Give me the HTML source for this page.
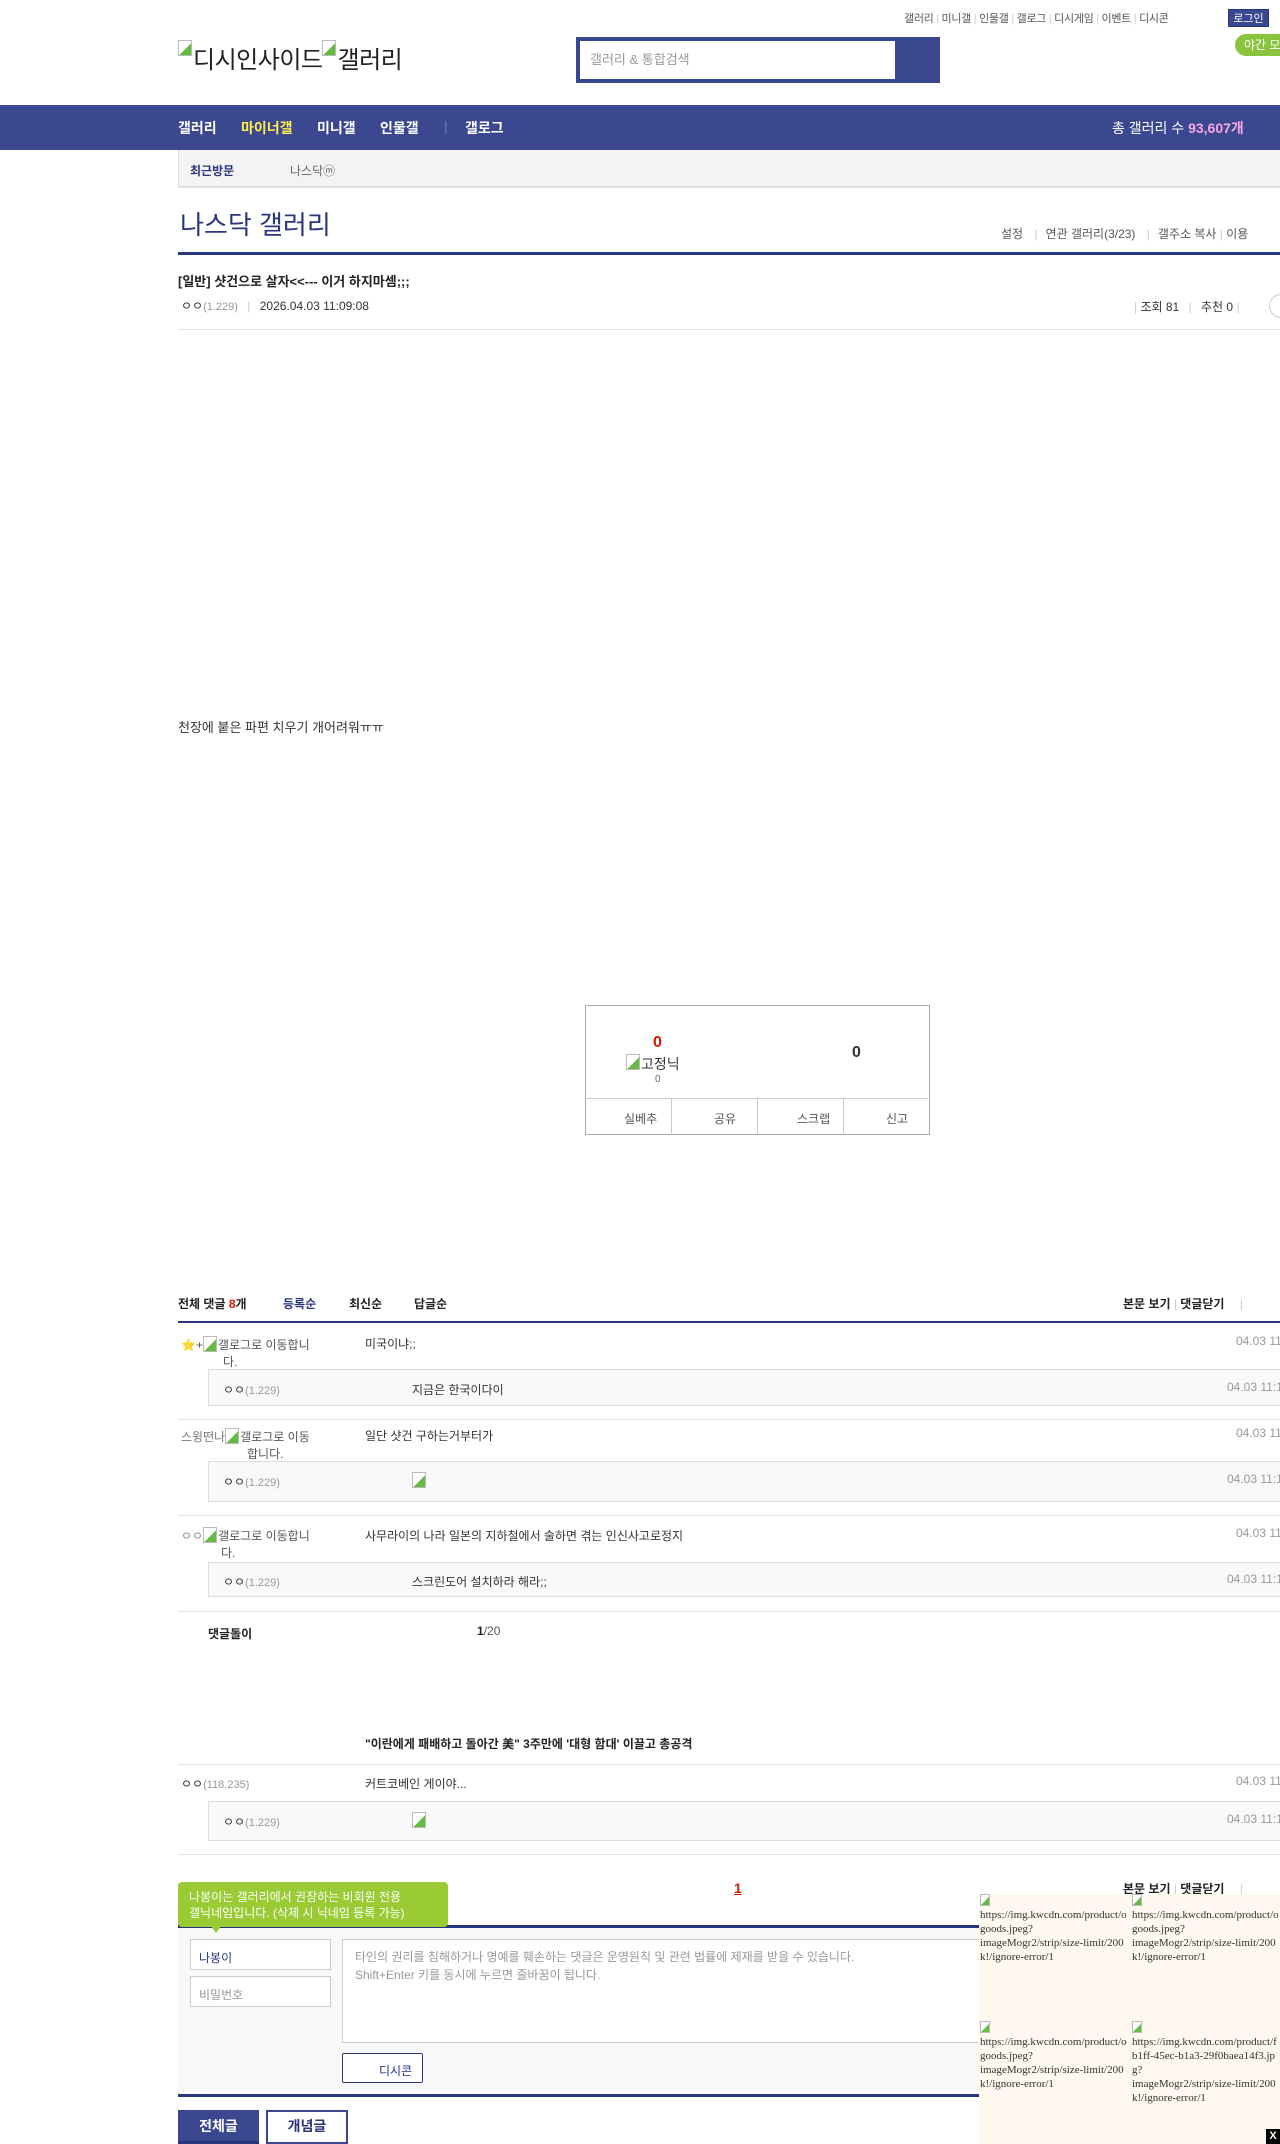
<!DOCTYPE html>
<html><head><meta charset="utf-8">
<style>
*{margin:0;padding:0;box-sizing:border-box}
html,body{width:1280px;height:2144px;overflow:hidden;background:#fff}
body{position:relative;font-family:"Liberation Sans","Noto Sans CJK KR",sans-serif;font-size:12px;color:#333}
.a{position:absolute;white-space:nowrap}
.top{font-size:11px;color:#555;top:10px;letter-spacing:-0.3px}
.nav{top:105px;left:0;width:1280px;height:45px;background:#3b4890}
.nav span{position:absolute;top:13px;font-size:14px;font-weight:bold;color:#fff}
.g{color:#999;font-size:11px}
.sep{position:absolute;height:1px;background:#e4e4e4;left:178px;width:1102px}
.rbox{position:absolute;left:208px;width:1072px;background:#f9f9f9;border-top:1px solid #ddd;border-bottom:1px solid #ddd;border-left:1px solid #ddd}
.dt{color:#999;font-size:12px}
.img{display:inline-block;width:14px;height:16px;border:1px solid #bbb;vertical-align:top;margin-right:1px;background:linear-gradient(135deg,#fff 55%,#6b4 56%)}
.ad{font-family:"Liberation Serif",serif;font-size:11px;color:#333;line-height:14px;white-space:normal;width:150px;word-break:break-all}
</style></head><body>
<div class="a top" style="left:904px">갤러리 <span style="color:#ccc">|</span> 미니갤 <span style="color:#ccc">|</span> 인물갤 <span style="color:#ccc">|</span> 갤로그 <span style="color:#ccc">|</span> 디시게임 <span style="color:#ccc">|</span> 이벤트 <span style="color:#ccc">|</span> 디시콘</div>
<div class="a" style="left:1228px;top:9px;width:41px;height:18px;background:#3b4890;color:#fff;font-size:11px;text-align:center;line-height:18px;border:1px solid #29367c">로그인</div>
<div class="a" style="left:1235px;top:34px;width:60px;height:22px;background:#8ac43f;border-radius:11px;color:#fff;font-size:12px;line-height:22px;padding-left:9px">야간 모드</div>
<div class="a" style="left:178px;top:40px;font-size:24px;color:#222;letter-spacing:-0.5px"><span class="img"></span>디시인사이드<span class="img"></span>갤러리</div>
<div class="a" style="left:576px;top:37px;width:364px;height:46px;background:#3b4890"></div>
<div class="a" style="left:580px;top:41px;width:315px;height:38px;background:#fff;color:#999;font-size:13px;line-height:38px;padding-left:10px">갤러리 &amp; 통합검색</div>
<div class="a nav">
<span style="left:178px">갤러리</span><span style="left:241px;color:#ffed4a">마이너갤</span><span style="left:317px">미니갤</span><span style="left:380px">인물갤</span><span style="left:444px;color:#6f7ab0;font-weight:normal">|</span><span style="left:465px">갤로그</span>
<span style="left:1112px;font-weight:normal">총 갤러리 수 <b style="color:#f9a8e0">93,607개</b></span></div>
<div class="a" style="left:178px;top:150px;width:1102px;height:38px;background:#f3f3f3;border-left:1px solid #ddd;border-bottom:2px solid #ddd"></div>
<div class="a" style="left:190px;top:162px;font-size:12px;font-weight:bold;color:#29367c">최근방문</div>
<div class="a" style="left:290px;top:162px;font-size:12px;color:#666">나스닥ⓜ</div>
<div class="a" style="left:180px;top:205px;font-size:26px;color:#29367c">나스닥 갤러리</div>
<div class="a" style="left:1001px;top:225px;font-size:12px;color:#555">설정 <span style="color:#ccc;margin:0 8px">|</span>연관 갤러리(3/23) <span style="color:#ccc;margin:0 8px">|</span>갤주소 복사 <span style="color:#ccc">|</span> 이용</div>
<div class="a" style="left:178px;top:252px;width:1102px;height:3px;background:#29367c"></div>
<div class="a" style="left:178px;top:271px;font-size:13px;font-weight:bold;color:#222">[일반] 샷건으로 살자&lt;&lt;--- 이거 하지마셈;;;</div>
<div class="a" style="left:181px;top:297px;font-size:12px;color:#333">ㅇㅇ<span class="g">(1.229)</span> <span style="color:#ccc;margin:0 6px">|</span> 2026.04.03 11:09:08</div>
<div class="a" style="left:1134px;top:298px;font-size:12px;color:#333"><span style="color:#ccc">|</span> 조회 81 <span style="color:#ccc;margin:0 6px">|</span> 추천 0 <span style="color:#ccc">|</span></div>
<div class="a" style="left:1269px;top:294px;width:24px;height:24px;border:1px solid #ccc;border-radius:12px"></div>
<div class="sep" style="top:329px"></div>
<div class="a" style="left:178px;top:717px;font-size:13px;color:#333">천장에 붙은 파편 치우기 개어려워ㅠㅠ</div>
<div class="a" style="left:585px;top:1005px;width:345px;height:130px;border:1px solid #aaa"></div>
<div class="a" style="left:585px;top:1098px;width:345px;height:1px;background:#ccc"></div>
<div class="a" style="left:671px;top:1098px;width:1px;height:37px;background:#ccc"></div>
<div class="a" style="left:757px;top:1098px;width:1px;height:37px;background:#ccc"></div>
<div class="a" style="left:843px;top:1098px;width:1px;height:37px;background:#ccc"></div>
<div class="a" style="left:653px;top:1034px;font-size:16px;font-weight:bold;color:#d31900">0</div>
<div class="a" style="left:626px;top:1054px;font-size:14px;color:#333"><span class="img"></span>고정닉</div>
<div class="a" style="left:655px;top:1074px;font-size:10px;color:#666">0</div>
<div class="a" style="left:852px;top:1044px;font-size:16px;font-weight:bold;color:#333">0</div>
<div class="a" style="left:624px;top:1110px;font-size:12px;color:#555">실베추</div>
<div class="a" style="left:714px;top:1110px;font-size:12px;color:#555">공유</div>
<div class="a" style="left:797px;top:1110px;font-size:12px;color:#555">스크랩</div>
<div class="a" style="left:886px;top:1110px;font-size:12px;color:#555">신고</div>

<div class="a" style="left:178px;top:1295px;font-size:12px;font-weight:bold;color:#222">전체 댓글 <span style="color:#d31900">8</span>개</div>
<div class="a" style="left:283px;top:1295px;font-size:12px;font-weight:bold;color:#29367c">등록순</div>
<div class="a" style="left:349px;top:1295px;font-size:12px;font-weight:bold;color:#222">최신순</div>
<div class="a" style="left:414px;top:1295px;font-size:12px;font-weight:bold;color:#222">답글순</div>
<div class="a" style="left:1123px;top:1295px;font-size:12px;font-weight:bold;color:#222">본문 보기 <span style="color:#ccc;font-weight:normal">|</span> 댓글닫기 <span style="color:#ccc;font-weight:normal;margin-left:12px">|</span></div>
<div class="a" style="left:178px;top:1321px;width:1102px;height:2px;background:#29367c"></div>

<div class="a" style="left:181px;top:1336px;font-size:12px;color:#555">⭐+<span class="img"></span>갤로그로 이동합니<br><span style="margin-left:42px">다.</span></div>
<div class="a" style="left:365px;top:1335px">미국이냐;;</div>
<div class="a dt" style="left:1236px;top:1334px">04.03 11</div>
<div class="rbox" style="top:1369px;height:37px"></div>
<div class="a" style="left:223px;top:1381px;font-size:12px">ㅇㅇ<span class="g">(1.229)</span></div>
<div class="a" style="left:412px;top:1381px">지금은 한국이다이</div>
<div class="a dt" style="left:1227px;top:1380px">04.03 11:1</div>
<div class="sep" style="top:1419px"></div>

<div class="a" style="left:181px;top:1428px;font-size:12px;color:#777">스윙떤나<span class="img"></span><span style="color:#555">갤로그로 이동</span><br><span style="margin-left:66px;color:#555">합니다.</span></div>
<div class="a" style="left:365px;top:1427px">일단 샷건 구하는거부터가</div>
<div class="a dt" style="left:1236px;top:1426px">04.03 11</div>
<div class="rbox" style="top:1461px;height:41px"></div>
<div class="a" style="left:223px;top:1473px;font-size:12px">ㅇㅇ<span class="g">(1.229)</span></div>
<div class="a" style="left:412px;top:1472px"><span class="img"></span></div>
<div class="a dt" style="left:1227px;top:1472px">04.03 11:1</div>
<div class="sep" style="top:1515px"></div>

<div class="a" style="left:181px;top:1527px;font-size:12px;color:#555"><span style="color:#888">ㅇㅇ</span><span class="img"></span>갤로그로 이동합니<br><span style="margin-left:40px">다.</span></div>
<div class="a" style="left:365px;top:1527px">사무라이의 나라 일본의 지하철에서 술하면 겪는 인신사고로정지</div>
<div class="a dt" style="left:1236px;top:1526px">04.03 11</div>
<div class="rbox" style="top:1562px;height:35px"></div>
<div class="a" style="left:223px;top:1573px;font-size:12px">ㅇㅇ<span class="g">(1.229)</span></div>
<div class="a" style="left:412px;top:1573px">스크린도어 설치하라 해라;;</div>
<div class="a dt" style="left:1227px;top:1572px">04.03 11:1</div>
<div class="sep" style="top:1611px"></div>

<div class="a" style="left:208px;top:1625px;font-size:12px;font-weight:bold;color:#222">댓글돌이</div>
<div class="a" style="left:477px;top:1624px;font-size:12px;color:#555"><b style="color:#222">1</b>/20</div>
<div class="a" style="left:365px;top:1735px;font-size:12px;font-weight:bold;color:#222">"이란에게 패배하고 돌아간 美" 3주만에 '대형 함대' 이끌고 총공격</div>
<div class="sep" style="top:1764px"></div>
<div class="a" style="left:181px;top:1775px;font-size:12px">ㅇㅇ<span class="g">(118.235)</span></div>
<div class="a" style="left:365px;top:1775px">커트코베인 게이야...</div>
<div class="a dt" style="left:1236px;top:1774px">04.03 11</div>
<div class="rbox" style="top:1801px;height:40px"></div>
<div class="a" style="left:223px;top:1813px;font-size:12px">ㅇㅇ<span class="g">(1.229)</span></div>
<div class="a" style="left:412px;top:1812px"><span class="img"></span></div>
<div class="a dt" style="left:1227px;top:1812px">04.03 11:1</div>
<div class="sep" style="top:1854px"></div>

<div class="a" style="left:734px;top:1880px;font-size:14px;font-weight:bold;color:#d31900;text-decoration:underline">1</div>
<div class="a" style="left:1123px;top:1880px;font-size:12px;font-weight:bold;color:#222">본문 보기 <span style="color:#ccc;font-weight:normal">|</span> 댓글닫기 <span style="color:#ccc;font-weight:normal;margin-left:12px">|</span></div>
<div class="a" style="left:178px;top:1925px;width:1102px;height:3px;background:#29367c"></div>
<div class="a" style="left:178px;top:1928px;width:1102px;height:167px;background:#f8f8f8"></div>
<div class="a" style="left:178px;top:2094px;width:1102px;height:3px;background:#29367c"></div>
<div class="a" style="left:178px;top:1882px;width:270px;height:45px;background:#9acb34;border-radius:4px;color:#fff;font-size:12px;line-height:16px;padding:7px 11px">나봉이는 갤러리에서 권장하는 비회원 전용<br>갤닉네임입니다. (삭제 시 닉네임 등록 가능)</div>
<div class="a" style="left:211px;top:1926px;width:0;height:0;border-left:5px solid transparent;border-right:5px solid transparent;border-top:7px solid #9acb34"></div>
<div class="a" style="left:190px;top:1939px;width:141px;height:31px;background:#fff;border:1px solid #ccc;font-size:12px;color:#29367c;padding:9px 8px">나봉이</div>
<div class="a" style="left:190px;top:1976px;width:141px;height:31px;background:#fff;border:1px solid #ccc;font-size:12px;color:#999;padding:9px 8px">비밀번호</div>
<div class="a" style="left:342px;top:1939px;width:938px;height:104px;background:#fff;border:1px solid #ccc;font-size:12px;color:#999;line-height:18px;padding:8px 12px">타인의 권리를 침해하거나 명예를 훼손하는 댓글은 운영원칙 및 관련 법률에 제재를 받을 수 있습니다.<br>Shift+Enter 키를 동시에 누르면 줄바꿈이 됩니다.</div>
<div class="a" style="left:342px;top:2053px;width:81px;height:30px;background:#fff;border:1px solid #29367c;border-radius:2px;font-size:12px;color:#29367c;padding:8px 0 0 36px">디시콘</div>
<div class="a" style="left:178px;top:2110px;width:81px;height:34px;background:#3b4890;color:#fff;font-size:14px;font-weight:bold;text-align:center;line-height:32px;border-bottom:3px solid #29367c">전체글</div>
<div class="a" style="left:266px;top:2110px;width:82px;height:34px;background:#fff;border:2px solid #3b4890;color:#29367c;font-size:14px;font-weight:bold;text-align:center;line-height:28px">개념글</div>

<div class="a" style="left:979px;top:1894px;width:301px;height:250px;background:#fff8ee"></div>
<div class="a ad" style="left:980px;top:1894px"><span class="img" style="width:10px;height:12px"></span><br>https://img.kwcdn.com/product/o goods.jpeg?<br>imageMogr2/strip/size-limit/200k!/ignore-error/1</div>
<div class="a ad" style="left:1132px;top:1894px"><span class="img" style="width:10px;height:12px"></span><br>https://img.kwcdn.com/product/o goods.jpeg?<br>imageMogr2/strip/size-limit/200k!/ignore-error/1</div>
<div class="a ad" style="left:980px;top:2021px"><span class="img" style="width:10px;height:12px"></span><br>https://img.kwcdn.com/product/o goods.jpeg?<br>imageMogr2/strip/size-limit/200k!/ignore-error/1</div>
<div class="a ad" style="left:1132px;top:2021px"><span class="img" style="width:10px;height:12px"></span><br>https://img.kwcdn.com/product/f b1ff-45ec-b1a3-29f0baea14f3.jpg?<br>imageMogr2/strip/size-limit/200k!/ignore-error/1</div>
<div class="a" style="left:1266px;top:2129px;width:14px;height:15px;background:#000;color:#fff;font-size:11px;font-weight:bold;text-align:center;line-height:15px">X</div>
</body></html>
